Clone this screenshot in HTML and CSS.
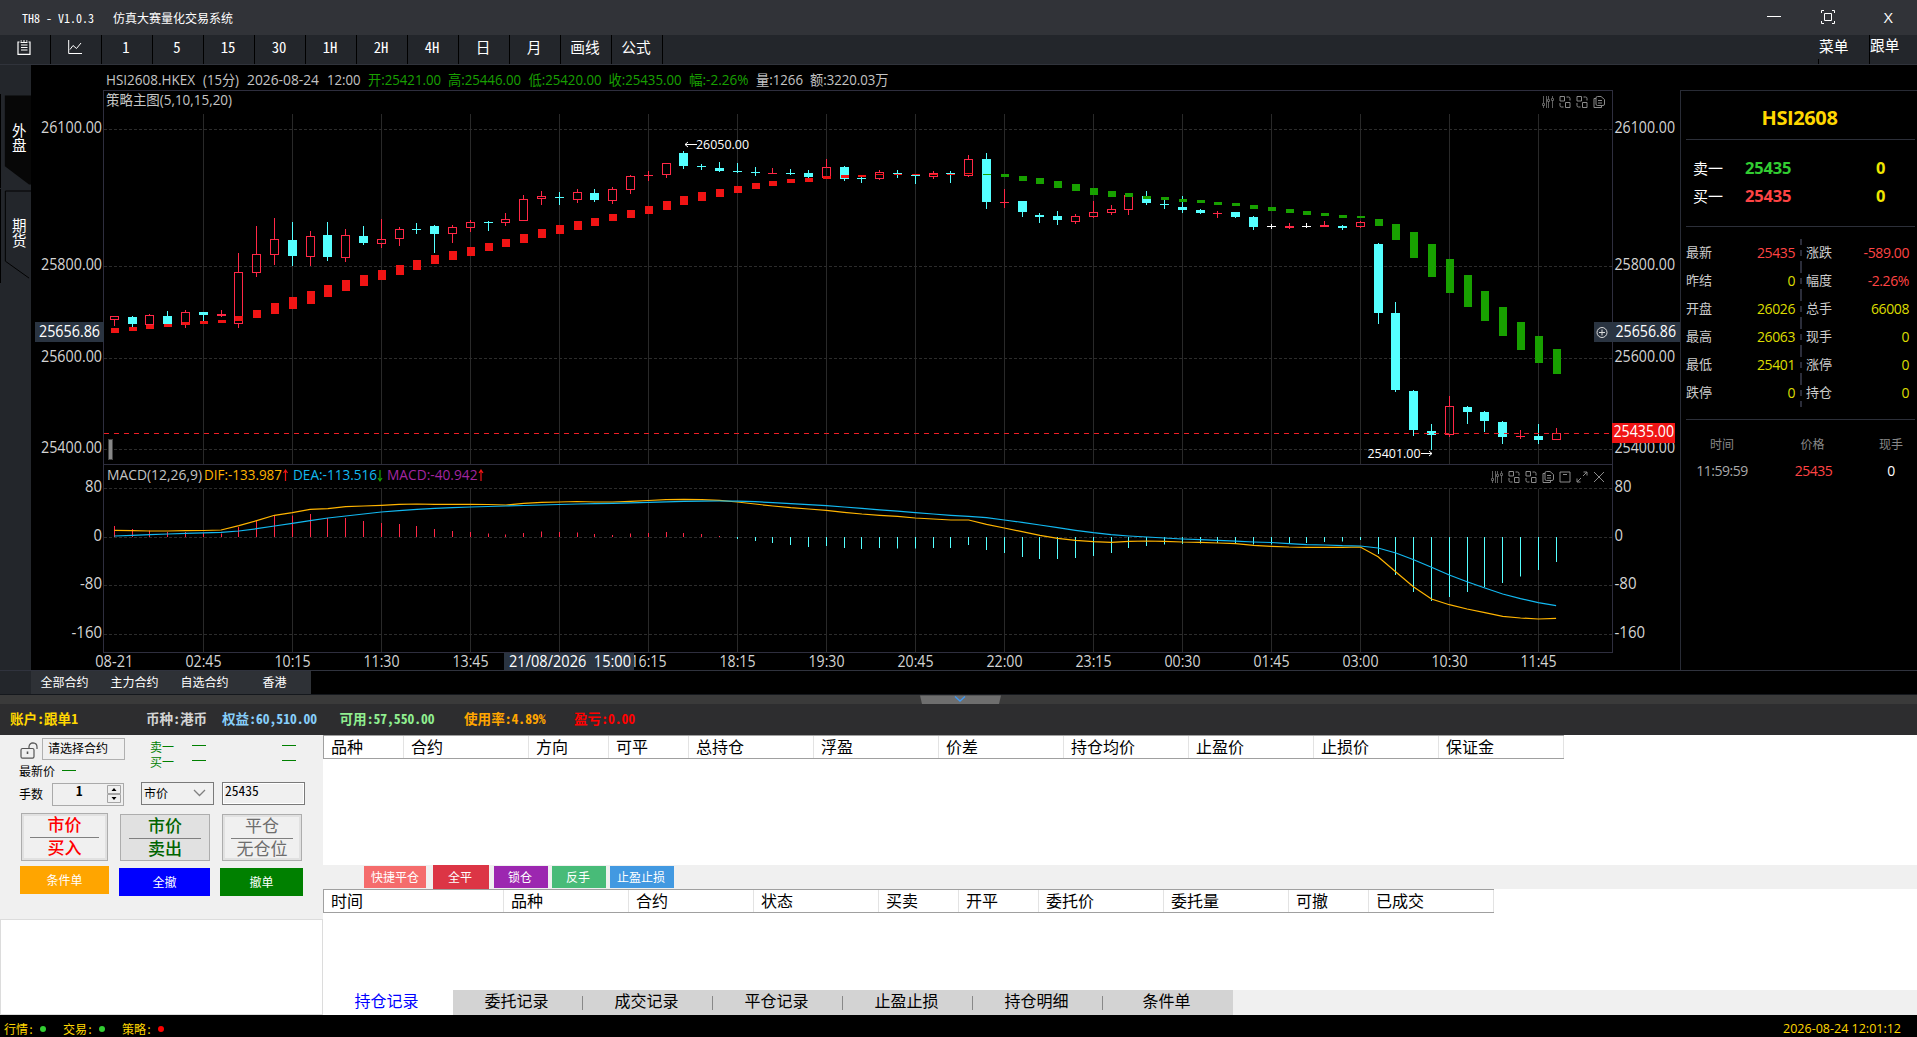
FILE: index.html
```html
<!DOCTYPE html>
<html lang="zh-CN">
<head>
<meta charset="utf-8">
<title>TH8 - V1.0.3 仿真大赛量化交易系统</title>
<link rel="stylesheet" href="styles.css">
</head>
<body>
<header class="titlebar">
  <span class="version">TH8 - V1.0.3</span><span class="appname">仿真大赛量化交易系统</span>
  <div class="window-buttons">
    <svg width="16" height="16" viewBox="0 0 16 16"><path d="M1 7.5H15"/></svg>
    <svg width="16" height="16" viewBox="0 0 16 16"><path d="M1.5 4V1.5H4M12 1.5H14.500V4M14.500 12V14.500H12M4 14.500H1.5V12M4.500 4.500H11.500V11.500H4.500Z"/></svg>
    <span class="close">X</span>
  </div>
</header>
<nav class="toolbar">
  <button><svg width="14" height="15" viewBox="0 0 14 15"><path d="M2.500 2H1V14.300H13V2H11.500M4 5H10.500M4 7.500H10.500M4 10H10.500M3.500 1H5M6 1H8M9 1H10.500M3.500 2.500H10.500" stroke-width="1.2"/></svg></button>
  <button><svg width="14" height="15" viewBox="0 0 14 15"><path d="M.7 0V13.500H14M2 9.500L5 5.500L8.500 8.500L13 3"/></svg></button>
  <button>1</button><button>5</button><button>15</button><button>30</button><button>1H</button><button>2H</button><button>4H</button><button>日</button><button>月</button><button>画线</button><button>公式</button>
  <div class="menus"><span>菜单</span><span>跟单</span></div>
</nav>
<main class="workspace">
  <aside class="markets">
    <div class="market on"><svg width="31" height="94" viewBox="0 0 31 94"><path d="M4 0H31V92H29L4 73Z"/></svg><span>外盘</span></div>
    <div class="market"><svg width="31" height="94" viewBox="0 0 31 94"><path d="M31 .5H4.500V73L29 90.500"/></svg><span>期货</span></div>
  </aside>
  <svg id="chart" class="chart" width="1649" height="605" viewBox="31 65 1649 605"></svg>
  <aside class="quote">
    <h1>HSI2608</h1>
    <div class="book">
      <span>卖一</span><b class="ask">25435</b><b>0</b>
      <span>买一</span><b class="bid">25435</b><b>0</b>
    </div>
    <div class="stats">
      <dl>
        <dt>最新</dt><dd class="down">25435</dd><dt>昨结</dt><dd>0</dd><dt>开盘</dt><dd>26026</dd>
        <dt>最高</dt><dd>26063</dd><dt>最低</dt><dd>25401</dd><dt>跌停</dt><dd>0</dd>
      </dl>
      <dl>
        <dt>涨跌</dt><dd class="down">-589.00</dd><dt>幅度</dt><dd class="down">-2.26%</dd><dt>总手</dt><dd>66008</dd>
        <dt>现手</dt><dd>0</dd><dt>涨停</dt><dd>0</dd><dt>持仓</dt><dd>0</dd>
      </dl>
    </div>
    <div class="ticks">
      <span>时间</span><span>价格</span><span>现手</span>
      <i>11:59:59</i><i class="down">25435</i><i class="lot">0</i>
    </div>
  </aside>
</main>
<div class="contracts"><nav><span>全部合约</span><span>主力合约</span><span>自选合约</span><span>香港</span></nav></div>
<div class="splitter"><svg width="81" height="9" viewBox="0 0 81 9"><path class="grip" d="M0 .5H81L79 9H2Z"/><path class="arrow" d="M35 1.500L40 6L45 1.500"/></svg></div>
<section class="account">
  <span class="c-gold">账户:跟单1</span><span class="c-grey">币种:港币</span><span class="c-sky">权益:60,510.00</span><span class="c-lime">可用:57,550.00</span><span class="c-orange">使用率:4.89%</span><span class="c-red">盈亏:0.00</span>
</section>
<section class="trade">
  <div class="order">
    <div class="pick">
      <div class="pick-left">
        <div class="contract-row">
          <svg width="18" height="17" viewBox="0 0 18 17"><path d="M2.500 6.500H12.500Q14 6.500 14 8V14.500Q14 16.200 12.500 16.200H2.500Q1 16.200 1 14.500V8Q1 6.500 2.500 6.500ZM9 6V4.500Q9.500 1 13 .800Q17 1 17 5V7"/><path d="M7.500 9.500V12" stroke-width="1.600"/></svg>
          <span class="contract">请选择合约</span>
        </div>
        <div class="last">最新价<em></em></div>
      </div>
      <div class="levels"><span>卖一</span><em></em><em></em><span>买一</span><em></em><em></em></div>
    </div>
    <div class="inputs">
      <label>手数</label>
      <div class="spin"><b>1</b><svg width="14" height="18" viewBox="0 0 14 18"><path class="box" d="M.5 .5H13.500V8.500H.5ZM.5 9.500H13.500V17.500H.5Z"/><path class="tri" d="M4.500 6H9.500L7 3ZM4.500 12H9.500L7 15Z"/></svg></div>
      <div class="combo">市价<svg width="13" height="8" viewBox="0 0 13 8"><path d="M1 1L6.500 6.500L12 1"/></svg></div>
      <div class="price">25435</div>
    </div>
    <div class="actions">
      <button class="buy"><span>市价</span><span>买入</span></button>
      <button class="sell"><span>市价</span><span>卖出</span></button>
      <button class="flat"><span>平仓</span><span>无仓位</span></button>
    </div>
    <div class="quick"><button>条件单</button><button>全撤</button><button>撤单</button></div>
    <div class="log"></div>
  </div>
  <div class="records">
    <div class="thead positions"><span>品种</span><span>合约</span><span>方向</span><span>可平</span><span>总持仓</span><span>浮盈</span><span>价差</span><span>持仓均价</span><span>止盈价</span><span>止损价</span><span>保证金</span></div>
    <div class="body-positions"></div>
    <div class="ops"><button>快捷平仓</button><button>全平</button><button>锁仓</button><button>反手</button><button>止盈止损</button></div>
    <div class="thead orders"><span>时间</span><span>品种</span><span>合约</span><span>状态</span><span>买卖</span><span>开平</span><span>委托价</span><span>委托量</span><span>可撤</span><span>已成交</span></div>
    <div class="body-orders"></div>
    <nav class="tabs"><span class="on">持仓记录</span><span>委托记录</span><span>成交记录</span><span>平仓记录</span><span>止盈止损</span><span>持仓明细</span><span>条件单</span></nav>
  </div>
</section>
<footer class="status">
  <span>行情:<i class="ok"></i></span><span>交易:<i class="ok"></i></span><span>策略:<i class="bad"></i></span>
  <time>2026-08-24 12:01:12</time>
</footer>
<script src="chart.js"></script>
</body>
</html>
```
FILE: styles.css
```css
* { box-sizing: border-box; }
body { margin: 0; width: 1917px; height: 1037px; overflow: hidden; background: #000; color: #fff;
  font: 400 12px/1 "Noto Sans CJK SC", sans-serif; font-feature-settings: "hwid"; display: flex; flex-direction: column; }
button { font: inherit; font-feature-settings: inherit; color: inherit; border: 0; padding: 0; margin: 0; background: none; }
svg { display: block; }

.titlebar { height: 35px; background: #313338; display: flex; align-items: center; padding-left: 22px; flex: none; }
.version { width: 91px; }
.window-buttons { margin-left: auto; display: flex; gap: 38px; align-items: center; width: 151px; padding-bottom: 1px; }
.window-buttons svg { fill: none; stroke: #fff; }
.window-buttons .close { font: 15px "Open Sans", sans-serif; font-feature-settings: normal; margin-left: 10px; transform: scaleX(1.05); }

.toolbar { height: 30px; flex: none; background: #23262b; border-bottom: 1px solid #30333b; display: flex; font-size: 14.7px; }
.toolbar > button { width: 51px; border-right: 1px solid #000; padding: 0 2px 5px 0; display: flex; align-items: center; justify-content: center; }
.toolbar svg { fill: none; stroke: #fff; }
.menus { margin-left: auto; display: flex; }
.menus span { width: 51px; padding: 4px 0 0 1px; background: linear-gradient(#000, #000) 0 100% / 1px 5px no-repeat; }
.menus span:last-child { width: 48px; padding-top: 3px; background-size: 1px 100%; }

.workspace { display: flex; height: 605px; flex: none; }
.markets { width: 31px; background: #23262b; padding-top: 29px; }
.market { height: 95px; display: grid; }
.market > * { grid-area: 1 / 1; }
.market svg { fill: none; stroke: #000; border-left: 1px solid #000; }
.market.on svg { fill: #070707; stroke: none; }
.market span { width: 15px; margin-left: 12px; padding-top: 28px; font-size: 14.500px; line-height: 15px; }
.chart { flex: none; overflow: visible; }
.quote { flex: 1; margin-top: 25px; border-left: 1px solid #282b35; border-top: 1px solid #282b35; padding: 0 3px 0 5px; font-family: "Open Sans", "Noto Sans CJK SC", sans-serif; font-feature-settings: normal; }
.quote h1 { margin: 0; height: 49px; padding: 16px 2px 0 0; text-align: center; font: bold 20px/22px "Open Sans", sans-serif; letter-spacing: -.4px; color: #ffd700; border-bottom: 1px solid #2c2f39; }
.book { height: 87px; padding: 14px 0 0 7px; display: grid; grid-template-columns: 52px 1fr 39px; grid-auto-rows: 28px; line-height: 28px; font-size: 15px; border-bottom: 1px solid #2c2f39; }
.book b { font-size: 16.5px; letter-spacing: -.2px; color: #eee600; }
.book b.ask { color: #32cd32; }
.book b.bid, .quote .down { color: #ff4444; }
.stats { height: 193px; padding-top: 12px; display: grid; grid-template-columns: 109px 103px; gap: 11px; border-bottom: 1px solid #2c2f39; background: repeating-linear-gradient(#2b2d3a 0 6px, #000 6px 11px, #2b2d3a 11px 17px, #000 17px 22px, #2b2d3a 22px 28px) 114px 12px / 2px 168px no-repeat; }
.stats dl { margin: 0; display: grid; grid-template-columns: auto auto; grid-auto-rows: 28px; line-height: 27px; font-size: 13px; color: #ccc; }
.stats dd { margin: 0; text-align: right; font-size: 14px; letter-spacing: -.4px; color: #dcdc00; }
.ticks { padding-top: 12px; display: grid; grid-template-columns: 72px 109px 48px; grid-auto-rows: 26px; line-height: 26px; text-align: center; color: #888; }
.ticks i { font-style: normal; font-size: 14px; letter-spacing: -.5px; color: #a9a9a9; }
.ticks .down { padding-left: 2px; }
.ticks .lot { color: #fff; }

.contracts { height: 25px; flex: none; border-top: 1px solid #30333e; border-bottom: 1px solid #15181d; background: #000; display: flex; }
.contracts::before { content: ""; width: 31px; background: #23262b; }
.contracts nav { display: flex; width: 280px; background: #2e3136; }
.contracts span { width: 70px; text-align: center; line-height: 21px; padding-right: 3px; }
.splitter { height: 9px; flex: none; background: #3a3a3a; padding-left: 920px; }
.grip { fill: #6e6e6e; }
.arrow { fill: none; stroke: #4299f1; stroke-width: 1.4; }
.account { height: 31px; flex: none; background: #2d2d2f; display: grid; grid-template-columns: 136px 76px 117.500px 124.500px 110px auto; padding-left: 10px; line-height: 29px; font-size: 13.6px; font-weight: bold; white-space: nowrap; }
.c-gold { color: #ffd700; } .c-grey { color: #d3d3d3; } .c-sky { color: #87cefa; } .c-lime { color: #90ee90; } .c-orange { color: #ffa500; } .c-red { color: #f00; }

.trade { height: 280px; flex: none; display: flex; color: #000; background: #fff; }
.order { width: 323px; background: #f0f0f0; display: flex; flex-direction: column; }
.pick { height: 46px; display: flex; padding: 3px 0 0 20px; }
.pick-left { width: 130px; }
.contract-row { display: flex; gap: 4px; align-items: center; }
.contract-row svg { fill: none; stroke: #555; stroke-width: 1.200; margin-top: 3px; }
.contract { width: 83px; height: 22px; border: 1px solid #b0b0b0; line-height: 17px; padding-left: 5px; }
.last { line-height: 22px; margin-left: -1px; }
em { display: inline-block; width: 14px; height: 1px; background: #008000; }
.last em { margin: 0 0 5px 7px; }
.levels { display: grid; grid-template-columns: 42px 90px 14px; grid-auto-rows: 15px; line-height: 15px; padding-top: 1px; color: #008000; }
.levels em { align-self: center; margin-bottom: 2px; }
.inputs { height: 32px; padding-left: 19px; display: flex; align-items: flex-start; padding-top: 1px; }
.inputs label { width: 33px; line-height: 24px; }
.spin { width: 72px; height: 23px; border: 1px solid #aaa; display: flex; padding: 1px 2px 0 23px; justify-content: space-between; line-height: 12px; font-size: 13px; margin: 1px 17px 0 0; }
.spin .box { fill: #f0f0f0; stroke: #a5a5a5; } .spin .tri { fill: #000; }
.combo { width: 73px; height: 23px; border: 1px solid #7a7a7a; display: flex; justify-content: space-between; align-items: center; padding: 0 7px 2px 2px; margin-right: 8px; }
.combo svg { fill: none; stroke: #808080; stroke-width: 1.300; }
.price { width: 83px; height: 23px; border: 1px solid #7a7a7a; box-shadow: inset 0 0 0 1px #fff; padding-left: 2px; line-height: 15px; font-size: 13.5px; }
.actions { height: 53px; display: grid; grid-template-columns: 87px 90px 80px; gap: 12px; padding-left: 21px; align-items: start; }
.actions button { height: 47px; margin-top: 1px; border: 1px solid #adadad; box-shadow: inset 0 0 0 2px #e1e1e1; font-size: 17px; display: flex; flex-direction: column; align-items: center; padding: 0 8px; background: #f0f0f0; }
.actions button.buy { height: 48px; margin-top: 0; }
.actions span { width: 100%; line-height: 17px; }
.actions span:first-child { border-bottom: 1px solid #808080; height: 24px; line-height: 20px; }
.actions .buy { color: #f00; font-weight: 500; }
.actions .sell { color: #006400; font-weight: 500; background: #e1e1e1; }
.actions .flat { color: #6d6d6d; }
.quick { height: 53px; padding-left: 20px; display: grid; grid-template-columns: 89px 91px 83px; gap: 10px; align-items: start; color: #fff; }
.quick button { height: 28px; margin-top: 2px; padding-bottom: 1px; background: #00f; }
.quick button:first-child { background: #ffa500; margin-top: 0; }
.quick button:last-child { background: #008000; }
.log { flex: 1; background: #fff; border: 1px solid #dcdcdc; }

.records { flex: 1; display: flex; flex-direction: column; }
.thead { height: 24px; display: grid; align-self: flex-start; border-top: 1px solid #a0a0a0; border-bottom: 1px solid #a0a0a0; border-left: 1px solid #a0a0a0; font-size: 16px; line-height: 20px; }
.thead span { padding-left: 7px; border-right: 1px solid #e3e3e3; }
.positions { grid-template-columns: 80px 125px 80px 80px repeat(7, 125px); }
.orders { grid-template-columns: 180px 125px 125px 125px 80px 80px 125px 125px 80px 125px; }
.body-positions { height: 106px; }
.ops { height: 24px; background: #f0f0f0; display: flex; align-items: center; padding-left: 41px; color: #fff; }
.ops button { height: 22px; width: 62px; padding-bottom: 1px; background: #f56c6c; margin-right: 7px; }
.ops button:nth-child(2) { width: 56px; height: 24px; background: #dc3545; margin-right: 5px; padding-right: 2px; }
.ops button:nth-child(3) { width: 54px; background: #9c27b0; margin-right: 4px; padding-right: 2px; }
.ops button:nth-child(4) { width: 54px; background: #48bb78; margin-right: 4px; padding-right: 2px; }
.ops button:nth-child(5) { width: 64px; background: #4299e1; padding-right: 2px; }
.body-orders { flex: 1; }
.tabs { height: 25px; background: #f0f0f0; display: flex; font-size: 16px; }
.tabs span { width: 130px; background: linear-gradient(#888, #888) 100% 50% / 1px 14px no-repeat #d3d3d3; line-height: 21px; text-align: center; padding-right: 3px; }
.tabs span.on { background: #fff; color: #00f; }
.tabs span:last-child { background: #d3d3d3; }

.status { height: 22px; flex: none; display: flex; padding: 6px 16px 0 4px; color: #ffd700; line-height: 16px; }
.status span { width: 59px; display: flex; align-items: center; }
.status i { width: 6px; height: 6px; border-radius: 50%; background: #32cd32; margin-left: 6px; }
.status i.bad { background: #f00; }
.status time { margin-left: auto; font-family: "Open Sans", sans-serif; font-feature-settings: normal; font-size: 12.5px; line-height: 15px; }

.chart text { font-family: "Open Sans", "Noto Sans CJK SC", sans-serif; font-feature-settings: normal; font-size: 15.5px; fill: #d4d4d4; white-space: pre; }
.chart .info { font-size: 14px; fill: #c4c4c4; }
.chart .mark { font-size: 12.5px; fill: #fff; }
.chart .lit { fill: #fff; }
.chart .green { fill: #18a000; }
.chart .dif { fill: #ffb400; } .chart .dea { fill: #12b8f0; } .chart .macd { fill: #a326a0; }
.chart .tools { fill: none; stroke: #8a8a8a; stroke-width: 1; }
.chart .tool-sliders { stroke: #777; stroke-width: .8; }
```
FILE: chart.js
```js
const X0 = 114.3, STEP = 17.8;
const x = i => X0 + STEP * i;
const RED = '#ff2846', CYAN = '#54ffff', WHITE = '#ffffff';

// Candles: colour, high, body top, body bottom, low
const candles = `r 316 316 320 326,c 316 317 324 327,r 314 315 325 325,c 311 316 324 324,r 310 312 325 328,c 312 312 315 321,r 310 314 316 317,r 253 272 324 328,r 226 254 273 277,r 218 239 255 265,c 222 240 256 266,r 231 236 257 266,c 222 235 257 261,r 229 235 258 262,c 226 236 243 245,r 219 239 244 248,r 227 229 239 246,c 223 229 230 234,c 225 226 234 253,r 225 227 234 243,r 220 222 228 232,c 221 222 223 231,r 213 219 223 226,r 195 199 221 221,r 191 196 199 205,c 192 197 198 205,r 189 192 200 203,c 189 193 200 202,r 187 189 201 204,r 175 176 190 194,r 171 175 176 181,r 163 163 175 178,c 151 153 166 169,c 164 166 167 170,c 162 168 171 172,c 163 171 172 173,c 167 172 173 176,r 168 173 174 174,c 169 173 174 175,c 170 173 177 178,r 159 167 178 178,c 166 167 179 181,c 177 178 179 183,r 170 172 179 180,c 170 173 174 178,c 174 175 176 184,r 171 173 177 179,c 171 173 174 183,r 155 159 176 177,c 153 159 202 209,r 189 202 203 208,c 201 201 212 217,c 213 215 217 223,c 211 216 220 225,r 214 216 222 224,r 201 212 217 218,r 205 209 213 215,r 195 195 210 215,c 191 196 203 205,c 200 204 205 209,c 196 207 210 213,c 209 210 213 214,r 211 213 214 218,c 212 212 217 218,c 216 217 227 230,w 224 226 227 229,r 223 226 228 229,w 223 226 227 228,r 221 225 227 227,c 225 226 228 230,r 221 222 227 228,c 243 244 313 324,c 302 313 390 392,c 390 391 430 436,c 424 431 435 450,r 396 406 435 437,c 406 407 412 424,c 411 412 421 432,c 421 422 437 444,r 430 436 437 439,c 424 436 440 444,r 428 433 440 440`
  .split(',').map(s => { const [c, ...v] = s.split(' '); return [c, ...v.map(Number)]; });

// Trend blocks: top, bottom per bar
const blocks = [[328,333],[327,331],[325,329],[324,327],[322,325],[321,324],[320,323],[316,321],[310,318],[303,314],[297,309],[291,304],[285,297],[280,291],[275,286],[270,280],[265,275],[260,270],[255,264],[251,260],[247,256],[243,251],[239,247],[234,243],[229,238],[225,234],[221,230],[218,226],[214,221],[210,218],[206,214],[201,210],[196,205],[192,201],[189,197],[186,193],[183,189],[181,186],[179,183],[178,182],[176,179],[175,178],[175,177],[174,175],[174,175],[174,175],[174,175],[174,175],[173,174],
[174,175],[174,177],[176,181],[178,184],[181,188],[184,191],[188,195],[191,197],[193,197],[196,199],[197,200],[199,202],[200,203],[202,205],[203,206],[205,209],[207,211],[209,213],[211,215],[213,216],[215,218],[216,218],[219,226],[224,240],[232,258],[244,277],[259,293],[275,307],[291,321],[307,336],[322,350],[336,363],[349,374]];

const hist = [526,529,530.5,532,532,533,533.5,527,521,515.5,515.5,514,518,518,521,523,524,526,529,531,532,533.5,534.5,533,531.5,532,532.5,534,535,533.5,533,532,533,534,536,539,541,543,545,547,546,548,549,548,548.5,548.5,548,548,545,550,553,557,559,559,558,556,553,548,546,544.5,544,543.5,543,543,544.5,544.5,543.5,543,542,541.5,540,554,575,592,601,597,592,587,583,576.5,570,562];
const dif = [530.3,530.7,531,531,530.7,530.5,530,525.7,520.7,515.3,512.7,509.3,508.7,506.7,506,505.3,504.3,504,504.3,504.3,504.3,504.5,505,503.3,502.3,502,501.5,502,502,501.3,500.5,499.7,499.3,499.7,500.3,502,504,506,507.7,509,510.3,512.3,514,515.3,516.3,518,519,520,520,524.3,528,531.7,535.3,538.3,540.3,541.7,542.3,541.3,541,541.3,542,542.3,543,543.7,545.3,546.3,547,547.3,547.3,547.3,547,556.7,572,587,599,604.7,609,612.7,616.3,618,619,618.3];
const dea = [536,535.3,534.7,534,533.3,532.8,532.3,531,528.7,526,523.3,520.7,518,516,514,512,510.7,509.3,508.3,507.6,507,506.5,506,505.5,505,504.5,504,503.6,503.3,502.8,502.3,501.8,501.3,501.1,501,501.2,501.7,502.7,503.7,504.7,505.7,507,508.3,509.8,511.2,512.7,514,515.3,516.3,517.7,520,522.3,525,527.7,530.3,532.7,534.7,536,537,538,539,539.7,540.3,541.2,542,542.5,543.7,544.7,545,545.7,546,548,553,559.7,567.3,575,581.7,588,594,598.7,602.7,605.7];

const out = [];
const rect = (l, t, w, h, fill) => out.push(`<rect x="${l}" y="${t}" width="${w}" height="${h}" fill="${fill}"/>`);
const line = (l, t, r, b, stroke, extra = '') => out.push(`<path d="M${l} ${t}L${r} ${b}" stroke="${stroke}" ${extra}/>`);
const text = (l, base, w, str, cls = '') => out.push(`<text x="${l}" y="${base}" textLength="${w}" lengthAdjust="spacingAndGlyphs" class="${cls}">${str}</text>`);

rect(31, 65, 1649, 605, '#000');

for (let i = 5; i <= 80; i += 5) {
  const gx = Math.floor(x(i)) + .5;
  line(gx, 114, gx, 464, '#292929');
  line(gx, 489, gx, 652, '#292929');
}
for (const y of [129.5, 266.5, 358.5, 449.5, 488.5, 537.5, 585.5, 634.5]) line(104, y, 1612, y, '#2c2c2c', 'stroke-dasharray="3 2"');

line(103, 90.5, 1613, 90.5, '#2e2e3e');
line(103, 464.5, 1613, 464.5, '#2e2e3e');
line(103, 652.5, 1613, 652.5, '#2e2e3e');
line(103.5, 90, 103.5, 652, '#2e2e3e');
line(1612.5, 90, 1612.5, 652, '#2e2e3e');

candles.forEach(([c, hi, top, bot, lo], i) => {
  const col = c === 'r' ? RED : c === 'c' ? CYAN : WHITE;
  const cx = Math.floor(x(i));
  if (c === 'r' && bot - top > 2) {
    rect(cx, hi, 1, top - hi, col);
    rect(cx, bot, 1, lo - bot, col);
    out.push(`<rect x="${cx - 3.5}" y="${top + .5}" width="8" height="${bot - top - 1}" fill="none" stroke="${col}"/>`);
  } else {
    rect(cx, hi, 1, lo - hi, col);
    rect(cx - 4, top, 9, bot - top, col);
  }
});
blocks.forEach(([t, b], i) => rect(Math.floor(x(i)) - 3, t, 8, b - t, i < 49 ? '#f01414' : '#18a000'));

line(104, 433.5, 1612, 433.5, '#ed1c24', 'stroke-dasharray="5 5"');
rect(108, 439, 5, 21, '#444');
rect(109, 440, 3, 19, '#888');

hist.forEach((y, i) => {
  const cx = Math.floor(x(i));
  y < 537 ? rect(cx, y, 1, 537 - y, RED) : rect(cx, 537, 1, y - 537, CYAN);
});
for (const [series, col] of [[dif, '#ffb400'], [dea, '#12b8f0']])
  out.push(`<polyline fill="none" stroke="${col}" stroke-width="1.2" points="${series.map((y, i) => x(i).toFixed(1) + ',' + y).join(' ')}"/>`);

[[26100, 133], [25800, 270], [25600, 362], [25400, 453]].forEach(([p, y]) => {
  text(41, y, 61, p + '.00');
  text(1614.5, y, 60.5, p + '.00');
});
[['80', 492, 17], ['0', 541, 8.5], ['-80', 589, 22], ['-160', 638, 30.5]].forEach(([s, y, w]) => {
  text(102 - w, y, w, s);
  text(1614.5, y, w, s);
});
'08-21 02:45 10:15 11:30 13:45 _ 16:15 18:15 19:30 20:45 22:00 23:15 00:30 01:45 03:00 10:30 11:45'.split(' ').forEach((s, i) => {
  if (s !== '_') text(x(i * 5) - (i ? 17.8 : 19), 667, i ? 36 : 38, s);
});

rect(35, 322, 69, 20, '#2a3441');
text(39, 337, 61, '25656.86', 'lit');
rect(1594, 322, 86, 20, '#2a3441');
text(1615.5, 337, 60.5, '25656.86', 'lit');
out.push('<g fill="none" stroke="#ddd"><circle cx="1602" cy="332.5" r="5"/><path d="M1599 332.500H1605M1602 329.500V335.500"/></g>');
rect(1612, 423, 63, 20, '#f01414');
text(1613.5, 437, 60.5, '25435.00', 'lit');
rect(504, 653, 130, 17, '#2a3441');
text(509, 667, 122, '21/08/2026  15:00', 'lit');

text(106, 85, 89, 'HSI2608.HKEX', 'info');
text(203, 85, 36, '(15分)', 'info');
text(247, 85, 72, '2026-08-24', 'info');
text(327, 85, 33.5, '12:00', 'info');
text(368, 85, 73, '开:25421.00', 'info green');
text(448, 85, 73, '高:25446.00', 'info green');
text(528.5, 85, 73, '低:25420.00', 'info green');
text(608.5, 85, 73, '收:25435.00', 'info green');
text(689, 85, 59.5, '幅:-2.26%', 'info green');
text(756, 85, 47, '量:1266', 'info');
text(810, 85, 78.5, '额:3220.03万', 'info');
text(106, 105, 126, '策略主图(5,10,15,20)', 'info');
text(107, 480, 95, 'MACD(12,26,9)', 'info');
text(204, 480, 78, 'DIF:-133.987', 'info dif');
text(293, 480, 84, 'DEA:-113.516', 'info dea');
text(387, 480, 90.5, 'MACD:-40.942', 'info macd');
const arrow = (ax, up, col) => out.push(`<path d="M${ax} 470V481M${ax - 2} ${up ? 473 : 478}L${ax} ${up ? 470 : 481}L${ax + 2} ${up ? 473 : 478}" fill="none" stroke="${col}" stroke-width="1.2"/>`);
arrow(285.5, true, '#f01414');
arrow(380, false, '#18a000');
arrow(481, true, '#f01414');

out.push('<path d="M685 144.500H697M688 142L685 144.500L688 147M1421 453.500H1432M1429 451L1432 453.500L1429 456" fill="none" stroke="#fff"/>');
text(696, 149, 53, '26050.00', 'mark');
text(1367.5, 458, 53, '25401.00', 'mark');

// Pane tool glyphs on a 12x12 grid
const glyphs = {
  sliders: 'M1.500 0V7M1.500 9V12M4.500 0V12M6.500 0V3M6.500 5V12M10.500 0V2M10.500 4V12M.5 7.500H2.500V9.500H.5ZM5.500 3.500H7.500V5.500H5.500ZM9.500 2.500H11.500V4.500H9.500Z',
  swap: 'M1 .5H5.500V5H1ZM6.500 6.500H11V11.500H6.500ZM7.500 1H9.500Q11 1 11 2.500V4.500M1 7V9.500Q1 11 2.500 11H4.500',
  copy: 'M4.500 .5H8L11.500 3.500V8Q11.500 9.500 10 9.500H4.500Q3 9.500 3 8V2Q3 .5 4.500 .5ZM3 2.500H1V11.500H8.500V9.500M5 4.500H9M5 7H9',
  pane: 'M1 1H11V11H1ZM4 3.500H8',
  expand: 'M7.500 1H11V4.500M11 1L7 5M1 7.500V11H4.500M1 11L5 7',
  close: 'M1 1L11 11M11 1L1 11'
};
const tools = (names, y) => names.split(' ').forEach((n, i, a) =>
  out.push(`<path class="tools tool-${n}" transform="translate(${1593 - (a.length - 1 - i) * 17} ${y})" d="${glyphs[n]}"/>`));
tools('sliders swap swap copy', 96);
tools('sliders swap swap copy pane expand close', 471);

document.getElementById('chart').innerHTML = out.join('');
```
